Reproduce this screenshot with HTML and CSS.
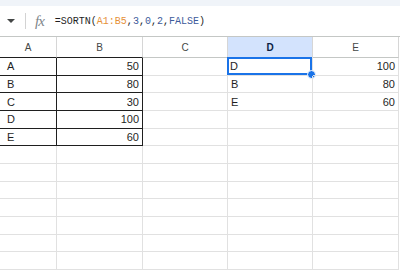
FILE: index.html
```html
<!DOCTYPE html>
<html lang="en">
  <head>
    <meta charset="UTF-8" />
    <title>Sheet</title>
    <link rel="stylesheet" href="styles.css">
  </head>
  <body>
    <div class="topband"></div>
    <div class="fbar">
      <span class="caret"></span>
      <span class="sep"></span>
      <span class="fx">fx</span>
      <span class="formula">=SORTN(<span class="ref">A1:B5</span>,<span class="num">3</span>,<span class="num">0</span>,<span class="num">2</span>,<span class="num">FALSE</span>)</span>
    </div>
    <div class="grid">
      <div class="hd rng">A</div>
      <div class="hd rng">B</div>
      <div class="hd">C</div>
      <div class="hd active">D</div>
      <div class="hd">E</div>

      <div class="c ra">A</div><div class="c rb num-cell">50</div><div class="c"></div><div class="c sel">D<span class="handle"></span></div><div class="c num-cell">100</div>
      <div class="c ra">B</div><div class="c rb num-cell">80</div><div class="c"></div><div class="c">B</div><div class="c num-cell">80</div>
      <div class="c ra">C</div><div class="c rb num-cell">30</div><div class="c"></div><div class="c">E</div><div class="c num-cell">60</div>
      <div class="c ra">D</div><div class="c rb num-cell">100</div><div class="c"></div><div class="c"></div><div class="c"></div>
      <div class="c ra">E</div><div class="c rb num-cell">60</div><div class="c"></div><div class="c"></div><div class="c"></div>

      <div class="c"></div><div class="c"></div><div class="c"></div><div class="c"></div><div class="c"></div>
      <div class="c"></div><div class="c"></div><div class="c"></div><div class="c"></div><div class="c"></div>
      <div class="c"></div><div class="c"></div><div class="c"></div><div class="c"></div><div class="c"></div>
      <div class="c"></div><div class="c"></div><div class="c"></div><div class="c"></div><div class="c"></div>
      <div class="c"></div><div class="c"></div><div class="c"></div><div class="c"></div><div class="c"></div>
      <div class="c"></div><div class="c"></div><div class="c"></div><div class="c"></div><div class="c"></div>
      <div class="c"></div><div class="c"></div><div class="c"></div><div class="c"></div><div class="c"></div>
    </div>
  </body>
</html>
```

FILE: styles.css
```css
body {
  margin: 0;
  font-family: "Liberation Sans", Arial, sans-serif;
  background: #fff;
  overflow: hidden;
}
.topband {
  height: 6px;
  background: #f0f4f9;
}
.fbar {
  display: flex;
  align-items: center;
  border-bottom: 1px solid #c4c7c5;
  box-sizing: border-box;
  height: 31px;
}
.caret {
  width: 0;
  height: 0;
  margin-left: 7px;
  border-left: 4px solid transparent;
  border-right: 4px solid transparent;
  border-top: 4px solid #444746;
}
.sep {
  width: 1px;
  height: 16px;
  background: #d3d3d3;
  margin-left: 10px;
}
.fx {
  margin-left: 9px;
  font-family: "Liberation Serif", serif;
  font-style: italic;
  font-size: 15px;
  color: #80868b;
  letter-spacing: -1px;
}
.formula {
  margin-left: 11px;
  font-family: "Liberation Mono", monospace;
  font-size: 10px;
  color: #1f1f1f;
}
.ref {
  color: #e69138;
}
.num {
  color: #3c5a9a;
}
.grid {
  display: grid;
  grid-template-columns: 57px 86px 85px 85px 86px;
  grid-template-rows: 21px;
  grid-auto-rows: 17.67px;
}
.hd {
  font-size: 10px;
  color: #444746;
  display: flex;
  align-items: center;
  justify-content: center;
  border-right: 1px solid #d6d6d6;
  border-bottom: 1px solid #c4c7c5;
  box-sizing: border-box;
}
.hd.rng {
  border-bottom-color: #1f1f1f;
}
.hd.active {
  background: #d3e3fd;
  color: #0b1f44;
  font-weight: bold;
}
.c {
  font-size: 11px;
  color: #1f1f1f;
  padding: 0 3px;
  display: flex;
  align-items: center;
  border-right: 1px solid #e1e1e1;
  border-bottom: 1px solid #e1e1e1;
  box-sizing: border-box;
  position: relative;
}
.num-cell {
  justify-content: flex-end;
}
.ra {
  border-right-color: #1f1f1f;
  border-bottom-color: #1f1f1f;
  padding-left: 7px;
}
.rb {
  border-right-color: #1f1f1f;
  border-bottom-color: #1f1f1f;
}
.sel {
  box-shadow: inset 0 0 0 2px #1a73e8;
  margin: -1px 0 0 -1px;
}
.handle {
  position: absolute;
  right: -4px;
  bottom: -4px;
  width: 7px;
  height: 7px;
  border-radius: 50%;
  background: #1a73e8;
  border: 1px solid #fff;
}
```
